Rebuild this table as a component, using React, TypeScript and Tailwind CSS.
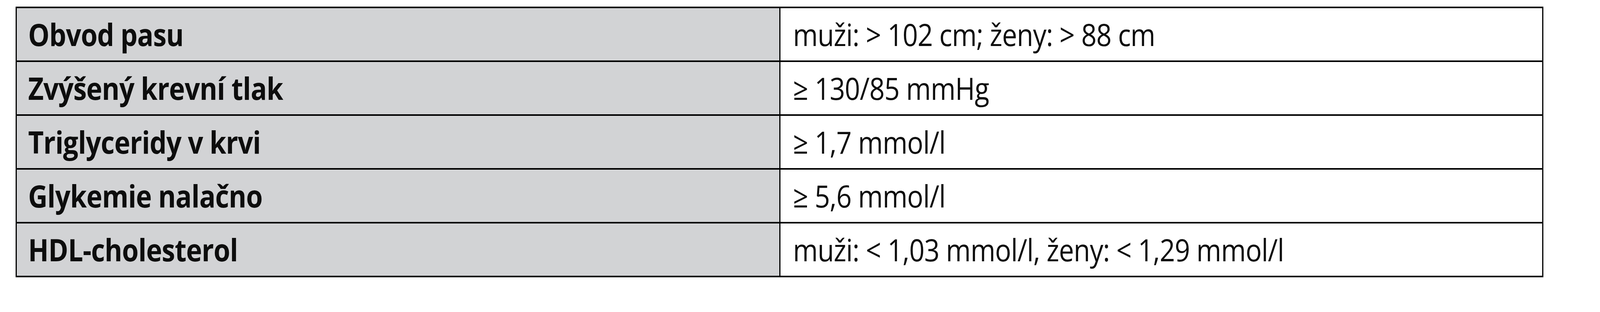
const rows = [
  { label: "Obvod pasu", value: "muži: > 102 cm; ženy: > 88 cm" },
  { label: "Zvýšený krevní tlak", value: "≥ 130/85 mmHg" },
  { label: "Triglyceridy v krvi", value: "≥ 1,7 mmol/l" },
  { label: "Glykemie nalačno", value: "≥ 5,6 mmol/l" },
  { label: "HDL-cholesterol", value: "muži: < 1,03 mmol/l, ženy: < 1,29 mmol/l" },
];

export default function App() {
  return (
    <div className="h-[800px] w-full overflow-hidden bg-white pt-[17px] font-['Open_Sans',sans-serif] text-[#0d0d0d]">
      <div className="ml-[0.971vw] flex w-[95.49vw] flex-col border-x-[3px] border-t-4 border-black">
        {rows.map((row) => (
          <div key={row.label} className="flex h-[138px] border-b-4 border-black">
            <div className="flex w-[47.73vw] shrink-0 items-center border-r-[3px] border-black bg-[#d2d3d5] pl-[0.72vw]">
              <span className="origin-left scale-x-[0.8835] whitespace-nowrap text-[78px] leading-none font-bold tracking-[-1px]">
                {row.label}
              </span>
            </div>
            <div className="flex min-w-0 flex-1 items-center pl-[0.78vw]">
              <span className="origin-left scale-x-[0.8835] whitespace-nowrap text-[78px] leading-none tracking-[-1px]">
                {row.value}
              </span>
            </div>
          </div>
        ))}
      </div>
    </div>
  );
}
